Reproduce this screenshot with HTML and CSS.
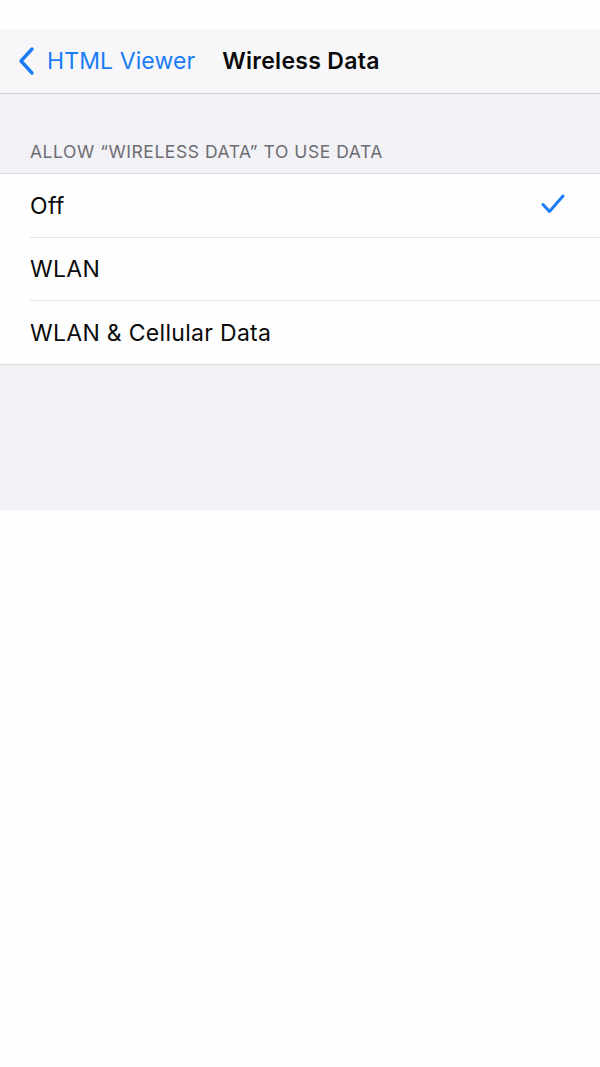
FILE: index.html
```html
<!DOCTYPE html>
<html>
<head>
<meta charset="utf-8">
<link rel="stylesheet" href="styles.css">
</head>
<body>
<div class="status"></div>
<header class="nav">
  <a class="back">
    <svg class="chev" width="20" height="30" viewBox="0 0 20 30"><path d="M15 3 L4 15 L15 27" fill="none" stroke="#1a7cf5" stroke-width="3.4" stroke-linecap="round" stroke-linejoin="round"/></svg>
    <span>HTML Viewer</span>
  </a>
  <h1 class="title">Wireless Data</h1>
</header>
<main class="content">
  <div class="section-header">ALLOW “WIRELESS DATA” TO USE DATA</div>
  <ul class="list">
    <li class="row"><span>Off</span>
      <svg class="check" width="26" height="22" viewBox="0 0 26 22"><path d="M3 11.5 L9.5 18.5 L23 3" fill="none" stroke="#1a7cf5" stroke-width="3" stroke-linecap="round" stroke-linejoin="round"/></svg>
    </li>
    <li class="row"><span>WLAN</span></li>
    <li class="row"><span>WLAN &amp; Cellular Data</span></li>
  </ul>
</main>
</body>
</html>
```
FILE: styles.css
```css
* { box-sizing: border-box; }
html, body { margin: 0; padding: 0; background: #fefefe; }
body { font-family: Inter, "Liberation Sans", sans-serif; width: 600px; }
.status { height: 29px; background: #fefefe; }
.nav {
  height: 65px;
  background: #f7f7f9;
  border-bottom: 1px solid #d4d4d8;
  display: flex;
  align-items: center;
  padding-left: 17px;
}
.back { display: flex; align-items: center; color: #1a7cf5; font-size: 23px; letter-spacing: 0.1px; }
.chev { margin-right: 10px; }
.title { margin: 0 0 0 27px; font-size: 23px; font-weight: 600; color: #0a0a0a; letter-spacing: 0.3px; }
.content { background: #f1f1f6; height: 416px; padding-top: 47px; }
.section-header { padding-left: 30px; font-size: 17.5px; color: #6d6d72; height: 32px; letter-spacing: 0.55px; }
.list { list-style: none; margin: 0; padding: 0 0 0 30px; background: #fefefe; border-top: 1px solid #dcdcdf; border-bottom: 1px solid #dcdcdf; }
.row {
  height: 63px;
  display: flex;
  align-items: center;
  justify-content: space-between;
  padding-right: 34px;
  font-size: 23px;
  color: #0a0a0a;
  letter-spacing: 0.3px;
  border-bottom: 1px solid #e2e2e5;
}
.row:first-child { height: 64px; }
.row:last-child { border-bottom: none; height: 63px; }
.check { margin-top: -4px; }
```
